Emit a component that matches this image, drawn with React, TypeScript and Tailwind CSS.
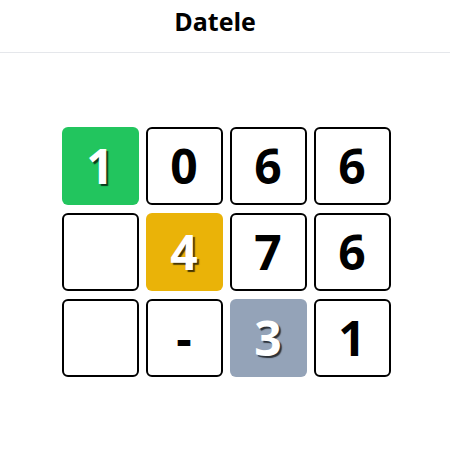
import React from "react";

type Tile = { v: string; c: "g" | "y" | "s" | "e" };

const rows: Tile[][] = [
  [{ v: "1", c: "g" }, { v: "0", c: "e" }, { v: "6", c: "e" }, { v: "6", c: "e" }],
  [{ v: "", c: "e" }, { v: "4", c: "y" }, { v: "7", c: "e" }, { v: "6", c: "e" }],
  [{ v: "", c: "e" }, { v: "-", c: "e" }, { v: "3", c: "s" }, { v: "1", c: "e" }],
];

function Cell({ t }: { t: Tile }) {
  const base =
    "w-[77px] h-[78px] rounded-[6px] flex items-center justify-center text-[48px] font-bold leading-none";
  if (t.c === "e") {
    return <div className={base + " border-2 border-black bg-white text-black"}>{t.v}</div>;
  }
  const bg = t.c === "g" ? "bg-[#22c55e]" : t.c === "y" ? "bg-[#eab308]" : "bg-[#94a3b8]";
  return (
    <div className={base + " text-white [text-shadow:2px_2px_1px_rgba(0,0,0,0.7)] " + bg}>{t.v}</div>
  );
}

export default function App() {
  return (
    <div className="w-[450px] h-[450px] bg-white" style={{ fontFamily: '"Open Sans", "Noto Sans", sans-serif' }}>
      <div className="h-[53px] border-b border-[#e5e7eb] flex items-start justify-center pt-[4px] pr-[20px]">
        <h1 className="text-[25px] leading-[34px] font-bold text-black">Datele</h1>
      </div>
      <div className="flex justify-center pt-[74px] pl-[2px]">
        <div className="grid grid-cols-4 gap-x-[7px] gap-y-[8px]">
          {rows.map((r, i) => r.map((t, j) => <Cell key={i + "-" + j} t={t} />))}
        </div>
      </div>
    </div>
  );
}
